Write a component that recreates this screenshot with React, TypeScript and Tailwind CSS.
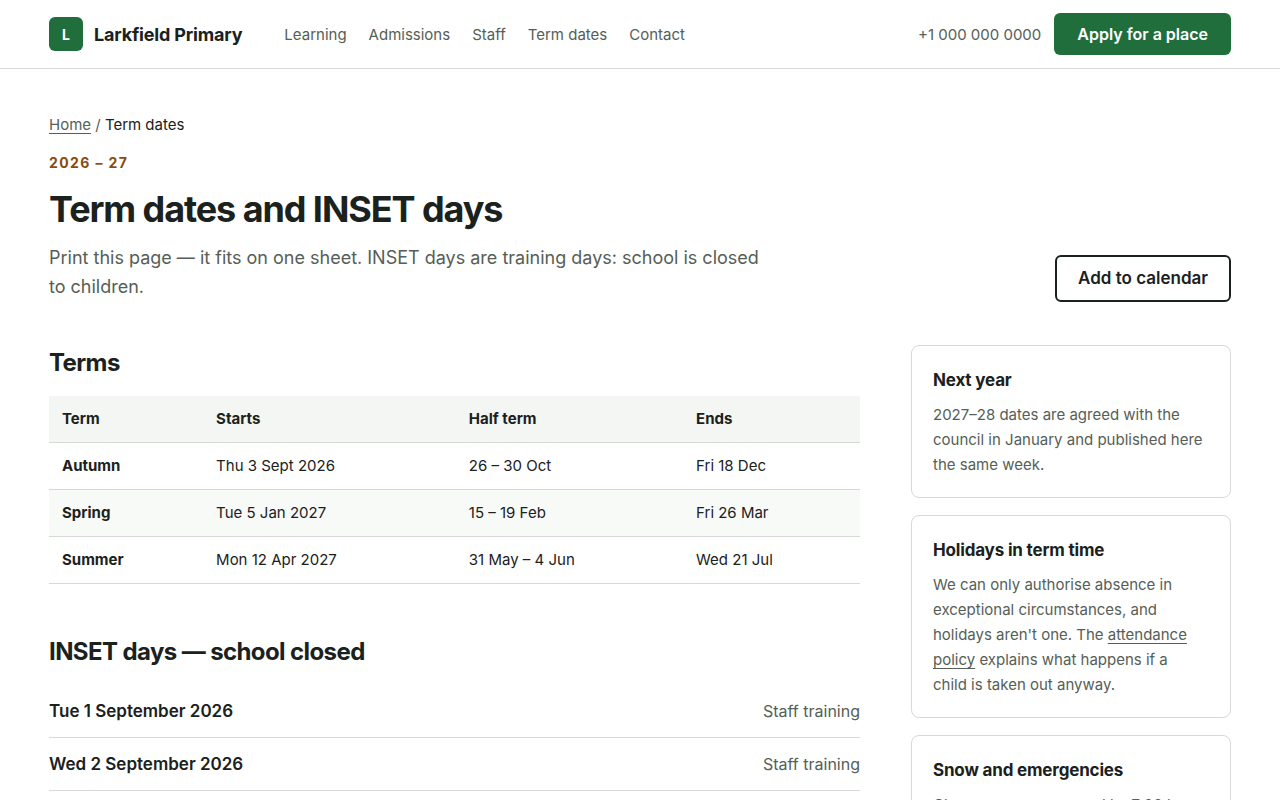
import type { ReactNode } from "react";

const navLinks = ["Learning", "Admissions", "Staff", "Term dates", "Contact"];

const terms = [
  { term: "Autumn", starts: "Thu 3 Sept 2026", half: "26 – 30 Oct", ends: "Fri 18 Dec" },
  { term: "Spring", starts: "Tue 5 Jan 2027", half: "15 – 19 Feb", ends: "Fri 26 Mar" },
  { term: "Summer", starts: "Mon 12 Apr 2027", half: "31 May – 4 Jun", ends: "Wed 21 Jul" },
];

const insetDays = [
  { date: "Tue 1 September 2026", reason: "Staff training" },
  { date: "Wed 2 September 2026", reason: "Staff training" },
];

function Header() {
  return (
    <header className="border-b border-[#d6dad6]">
      <div className="flex h-[68px] items-center px-[49px]">
        <a href="#home" className="flex items-center gap-[11px]">
          <span className="flex size-[34px] items-center justify-center rounded-md bg-[#216e3d] text-[14px] font-bold text-white">
            L
          </span>
          <span className="text-[18px] leading-[25px] font-bold tracking-[-0.01em]">Larkfield Primary</span>
        </a>
        <nav aria-label="Main" className="ml-[42px] flex gap-[22px] text-[15px] leading-[25px] text-[#565e57]">
          {navLinks.map((label) => (
            <a key={label} href="#">
              {label}
            </a>
          ))}
        </nav>
        <div className="ml-auto flex items-center gap-[13px]">
          <a href="tel:+10000000000" className="text-[15px] leading-[25px] text-[#565e57]">
            +1 000 000 0000
          </a>
          <a
            href="#apply"
            className="flex h-[42px] items-center rounded-md bg-[#216e3d] px-[23px] text-[16px] leading-[25px] font-semibold text-white"
          >
            Apply for a place
          </a>
        </div>
      </div>
    </header>
  );
}

function Card({ title, children }: { title: string; children: ReactNode }) {
  return (
    <section className="rounded-lg border border-[#d6dad6] px-[21px] pt-[21px] pb-5">
      <h3 className="text-[17px] leading-[27px] font-bold tracking-[-0.01em]">{title}</h3>
      <p className="mt-2 max-w-[271px] text-[15px] leading-[25px] text-[#565e57]">{children}</p>
    </section>
  );
}

export default function App() {
  return (
    <div className="min-h-screen bg-[#fefffe] font-['Inter',sans-serif] text-[#1b211d]">
      <Header />
      <main className="px-[49px] pt-[43px] pb-16">
        <nav aria-label="Breadcrumb" className="text-[15px] leading-[25px] text-[#565e57]">
          <a href="#home" className="underline underline-offset-[3px]">
            Home
          </a>{" "}
          / <span className="text-[#1b211d]">Term dates</span>
        </nav>
        <div className="mt-[15px] flex items-end justify-between gap-8">
          <div className="max-w-[714px] pb-px">
            <p className="text-[14px] leading-[22px] font-bold tracking-[0.1em] text-[#8a4b0f]">2026 – 27</p>
            <h1 className="mt-[13px] text-[36px] leading-[44px] font-bold tracking-[-0.03em]">
              Term dates and INSET days
            </h1>
            <p className="mt-3 text-[18px] leading-[29px] text-[#565e57]">
              Print this page — it fits on one sheet. INSET days are training days: school is closed to children.
            </p>
          </div>
          <button
            type="button"
            className="h-[47px] shrink-0 rounded-md border-2 border-[#1b211d] px-[21px] text-[17px] font-semibold"
          >
            Add to calendar
          </button>
        </div>

        <div className="mt-[43px] grid grid-cols-[minmax(0,1fr)_320px] items-start gap-[51px]">
          <div>
            <h2 className="text-[24px] leading-[36px] font-bold tracking-tight">Terms</h2>
            <table className="mt-[15px] w-full border-collapse text-left text-[15px] leading-[20px]">
              <thead>
                <tr className="border-b border-[#d6dad6] bg-[#f3f6f3]">
                  {["Term", "Starts", "Half term", "Ends"].map((label) => (
                    <th key={label} scope="col" className="px-[13px] py-[13px] font-bold">
                      {label}
                    </th>
                  ))}
                </tr>
              </thead>
              <tbody>
                {terms.map((row) => (
                  <tr key={row.term} className="border-b border-[#d6dad6] even:bg-[#f7faf7]">
                    <th scope="row" className="w-[19%] px-[13px] py-[13px] font-bold">
                      {row.term}
                    </th>
                    <td className="px-[13px] py-[13px]">{row.starts}</td>
                    <td className="px-[13px] py-[13px]">{row.half}</td>
                    <td className="px-[13px] py-[13px]">{row.ends}</td>
                  </tr>
                ))}
              </tbody>
            </table>

            <h2 className="mt-[50px] text-[24px] leading-[36px] font-bold tracking-tight">
              INSET days — school closed
            </h2>
            <ul className="mt-[15px]">
              {insetDays.map((day) => (
                <li
                  key={day.date}
                  className="flex justify-between border-b border-[#d6dad6] py-[12px] text-[16px] leading-[28px]"
                >
                  <span className="text-[17px] font-semibold">{day.date}</span>
                  <span className="text-[#565e57]">{day.reason}</span>
                </li>
              ))}
            </ul>
          </div>

          <aside className="flex flex-col gap-[17px]">
            <Card title="Next year">
              2027–28 dates are agreed with the council in January and published here the same week.
            </Card>
            <Card title="Holidays in term time">
              We can only authorise absence in exceptional circumstances, and holidays aren't one. The{" "}
              <a href="#policy" className="underline underline-offset-[3px]">
                attendance policy
              </a>{" "}
              explains what happens if a child is taken out anyway.
            </Card>
            <Card title="Snow and emergencies">Closures are announced by 7:00 by text and on this page.</Card>
          </aside>
        </div>
      </main>
    </div>
  );
}
